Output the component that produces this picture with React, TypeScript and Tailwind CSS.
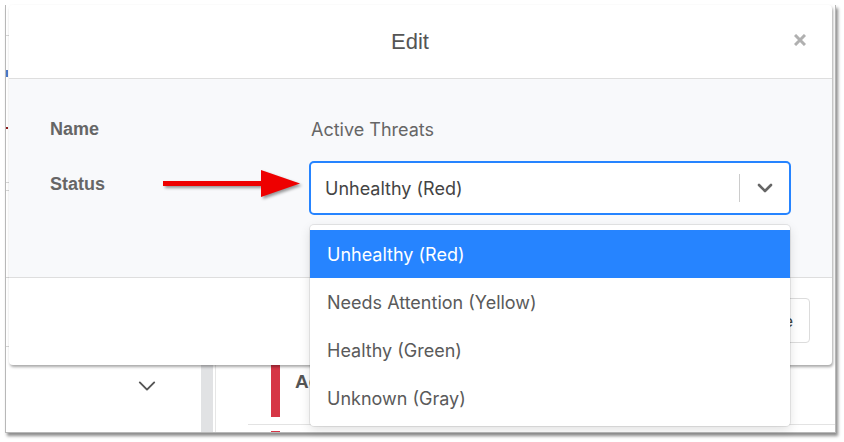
import React from 'react';

const statuses = ['Unhealthy (Red)', 'Needs Attention (Yellow)', 'Healthy (Green)', 'Unknown (Gray)'];

function Chevron({ className, weight = 2.6 }: { className?: string; weight?: number }) {
  return (
    <svg viewBox="0 0 16 10" className={className} fill="none" stroke="currentColor" strokeWidth={weight} strokeLinecap="round" strokeLinejoin="round">
      <path d="M2 2 L8 8 L14 2" />
    </svg>
  );
}

function RedArrow() {
  return (
    <svg width="140" height="32" viewBox="0 0 140 32" className="mt-[7px] mr-[8px] overflow-visible" style={{ filter: 'drop-shadow(2px 2px 1.5px rgba(0,0,0,0.4))' }}>
      <rect x="2" y="13" width="100" height="5" fill="#ee0000" />
      <polygon points="100,2 139,15.5 100,29" fill="#ee0000" />
    </svg>
  );
}

export default function App() {
  const selected = statuses[0];

  return (
    <div className="relative w-[844px] h-[442px] bg-white pl-[5px] pt-[5px] overflow-hidden font-['Inter',sans-serif]">
      {/* background page, mostly hidden by the modal */}
      <div className="flex w-[831px] h-[428px] border-l border-r border-b border-[#b8b8b8] bg-white shadow-[2px_3px_3px_rgba(0,0,0,0.45)]">
        {/* sidebar */}
        <div className="w-[195px] flex flex-col">
          <div className="h-[31px] border-b border-[#d6d6d6]" />
          <div className="h-[147px] border-b border-[#d6d6d6] flex flex-col">
            <div className="mt-[34px] w-[2px] h-[7px] bg-[#4a78c8]" />
            <div className="mt-[50px] w-[2px] h-[2px] bg-[#8b1a1a]" />
          </div>
          <div className="h-[8px] border-b border-[#d6d6d6]" />
          <div className="h-[87px] border-b border-[#d6d6d6]" />
          <div className="h-[69px] border-b border-[#d6d6d6]" />
          <div className="flex-1 flex justify-end pr-[44px] pt-[33px]">
            <Chevron className="w-[20px] h-[12px] text-[#555]" weight={1.6} />
          </div>
        </div>
        <div className="w-[12px] bg-[#e1e2e4]" />
        {/* main */}
        <div className="flex-1 ml-[2px] border-l border-[#e6e6e6] flex flex-col">
          <div className="flex-1" />
          <div className="h-[125px] ml-[32px] border-b border-[#e3e3e3] pl-[23px] py-[7px] flex">
            <div className="w-[9px] bg-[#d63646]" />
            <div className="ml-[15px] mt-[63px] text-[19px] leading-[24px] font-bold text-[#555] font-['Liberation_Sans',Arial,sans-serif]">
              Active Threats
            </div>
          </div>
          <div className="h-[7px] ml-[32px] pl-[23px] pt-[6px] flex">
            <div className="w-[9px] bg-[#d63646]" />
          </div>
        </div>
      </div>

      {/* Edit modal */}
      <div className="absolute left-[9px] top-[5px] w-[823px] h-[360px] bg-white rounded-[4px] shadow-[1px_2px_3px_rgba(0,0,0,0.35)] flex flex-col">
        <div className="relative h-[74px] border-b border-[#dedede] flex items-center justify-center pr-[21px]">
          <span className="text-[22px] text-[#555] font-['Liberation_Sans',Arial,sans-serif]">Edit</span>
          <svg viewBox="0 0 12 12" className="absolute right-[26px] top-[29px] w-[12px] h-[12px] text-[#b0b0b0]" stroke="currentColor" strokeWidth={3}>
            <path d="M1 1 L11 11 M11 1 L1 11" />
          </svg>
        </div>

        <div className="h-[199px] bg-[#f8f9fb] border-b border-[#dedede] pl-[41px] pr-[41px] pt-[38px]">
          <div className="flex items-center h-[24px]">
            <div className="w-[259px] text-[18px] font-bold text-[#666] font-['Liberation_Sans',Arial,sans-serif]">Name</div>
            <div className="pl-[2px] text-[18px] text-[#666]">Active Threats</div>
          </div>

          <div className="flex mt-[20px]">
            <div className="w-[259px] flex justify-between items-start">
              <div className="mt-[11px] text-[18px] leading-[24px] font-bold text-[#666] font-['Liberation_Sans',Arial,sans-serif]">Status</div>
              <RedArrow />
            </div>

            <div className="relative flex-1">
              <div className="h-[54px] bg-white border-2 border-[#2684ff] rounded-[5px] flex items-center">
                <span className="flex-1 pl-[14px] text-[18px] text-[#444]">{selected}</span>
                <div className="w-px h-[28px] bg-[#cccccc]" />
                <Chevron className="ml-[17px] mr-[16px] w-[16px] h-[10px] text-[#666]" />
              </div>

              {/* open menu */}
              <div className="absolute left-[1px] right-[1px] top-full mt-[10px] bg-white rounded-[4px] pt-[5px] pb-[4px] shadow-[0_0_0_1px_rgba(0,0,0,0.08),0_4px_11px_rgba(0,0,0,0.12)] z-10">
                {statuses.map((s) => (
                  <div
                    key={s}
                    className={`h-[48px] flex items-center pl-[17px] text-[18px] ${
                      s === selected ? 'bg-[#2684ff] text-white' : 'text-[#5a5a5a]'
                    }`}
                  >
                    {s}
                  </div>
                ))}
              </div>
            </div>
          </div>
        </div>

        <div className="flex-1 flex justify-end items-start pt-[20px] pr-[22px]">
          <button className="h-[45px] px-[16px] border border-[#dcdcdc] rounded-[4px] text-[16px] text-[#444] bg-white">
            Close
          </button>
        </div>
      </div>
    </div>
  );
}
